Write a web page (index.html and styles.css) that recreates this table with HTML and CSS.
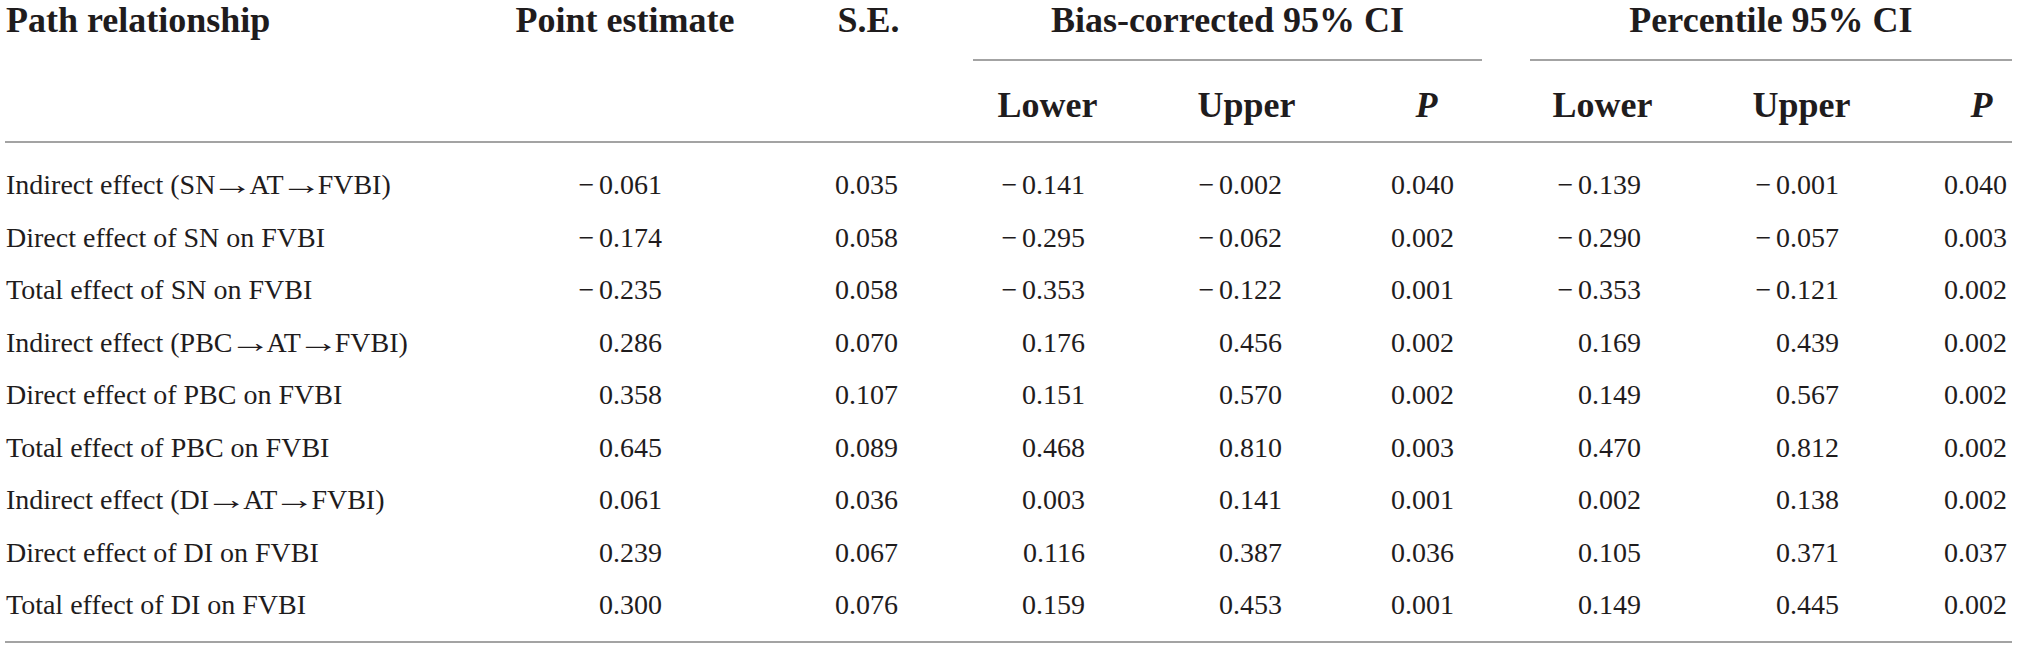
FILE: index.html
```html
<!DOCTYPE html>
<html lang="en">
<head>
<meta charset="utf-8">
<title>Mediation path analysis</title>
<link rel="stylesheet" href="styles.css">
</head>
<body>
<div class="tbl">
  <div class="thead">
    <div class="h h-path">Path relationship</div>
    <div class="h h-point">Point estimate</div>
    <div class="h h-se">S.E.</div>
    <div class="h h-group h-bias">Bias-corrected 95% CI</div>
    <div class="h h-group h-perc">Percentile 95% CI</div>
    <div class="h h-sub h-bl">Lower</div>
    <div class="h h-sub h-bu">Upper</div>
    <div class="h h-sub h-bp"><i>P</i></div>
    <div class="h h-sub h-pl">Lower</div>
    <div class="h h-sub h-pu">Upper</div>
    <div class="h h-sub h-pp"><i>P</i></div>
  </div>
  <div class="tbody">
    <div class="row"><span>Indirect effect (SN<span class="arr">→</span>AT<span class="arr">→</span>FVBI)</span><span>&#8722;&#8198;0.061</span><span>0.035</span><span>&#8722;&#8198;0.141</span><span>&#8722;&#8198;0.002</span><span>0.040</span><span></span><span>&#8722;&#8198;0.139</span><span>&#8722;&#8198;0.001</span><span>0.040</span></div>
    <div class="row"><span>Direct effect of SN on FVBI</span><span>&#8722;&#8198;0.174</span><span>0.058</span><span>&#8722;&#8198;0.295</span><span>&#8722;&#8198;0.062</span><span>0.002</span><span></span><span>&#8722;&#8198;0.290</span><span>&#8722;&#8198;0.057</span><span>0.003</span></div>
    <div class="row"><span>Total effect of SN on FVBI</span><span>&#8722;&#8198;0.235</span><span>0.058</span><span>&#8722;&#8198;0.353</span><span>&#8722;&#8198;0.122</span><span>0.001</span><span></span><span>&#8722;&#8198;0.353</span><span>&#8722;&#8198;0.121</span><span>0.002</span></div>
    <div class="row"><span>Indirect effect (PBC<span class="arr">→</span>AT<span class="arr">→</span>FVBI)</span><span>0.286</span><span>0.070</span><span>0.176</span><span>0.456</span><span>0.002</span><span></span><span>0.169</span><span>0.439</span><span>0.002</span></div>
    <div class="row"><span>Direct effect of PBC on FVBI</span><span>0.358</span><span>0.107</span><span>0.151</span><span>0.570</span><span>0.002</span><span></span><span>0.149</span><span>0.567</span><span>0.002</span></div>
    <div class="row"><span>Total effect of PBC on FVBI</span><span>0.645</span><span>0.089</span><span>0.468</span><span>0.810</span><span>0.003</span><span></span><span>0.470</span><span>0.812</span><span>0.002</span></div>
    <div class="row"><span>Indirect effect (DI<span class="arr">→</span>AT<span class="arr">→</span>FVBI)</span><span>0.061</span><span>0.036</span><span>0.003</span><span>0.141</span><span>0.001</span><span></span><span>0.002</span><span>0.138</span><span>0.002</span></div>
    <div class="row"><span>Direct effect of DI on FVBI</span><span>0.239</span><span>0.067</span><span>0.116</span><span>0.387</span><span>0.036</span><span></span><span>0.105</span><span>0.371</span><span>0.037</span></div>
    <div class="row"><span>Total effect of DI on FVBI</span><span>0.300</span><span>0.076</span><span>0.159</span><span>0.453</span><span>0.001</span><span></span><span>0.149</span><span>0.445</span><span>0.002</span></div>
  </div>
</div>
</body>
</html>
```
FILE: styles.css
```css
html, body {
  margin: 0;
  padding: 0;
  background: #ffffff;
}

body {
  font-family: "Liberation Serif", "Times New Roman", serif;
  color: #1f1c1d;
}

.tbl {
  margin-left: 5px;
  width: 2007px;
}

.thead,
.row {
  display: grid;
  grid-template-columns: 475px 290px 203px 149px 249px 111px 48px 145px 253px 84px;
}

.thead {
  grid-template-rows: 61px 80px;
  border-bottom: 2px solid #a3a3a3;
}

.h {
  font-weight: bold;
  font-size: 36px;
  line-height: 41px;
  white-space: nowrap;
  text-align: center;
}

.h i {
  font-style: italic;
}

.h-path {
  grid-column: 1;
  grid-row: 1 / 3;
  text-align: left;
  padding-left: 1px;
}

.h-point {
  grid-column: 2;
  grid-row: 1 / 3;
}

.h-se {
  grid-column: 3;
  grid-row: 1 / 3;
  padding-right: 6px;
}

.h-group {
  grid-row: 1;
  border-bottom: 2px solid #a3a3a3;
}

.h-bias {
  grid-column: 4 / 7;
}

.h-perc {
  grid-column: 8 / 11;
}

.h-sub {
  grid-row: 2;
  padding-top: 24px;
}

.h-bl { grid-column: 4; }
.h-bu { grid-column: 5; }
.h-bp { grid-column: 6; }
.h-pl { grid-column: 8; }
.h-pu { grid-column: 9; }
.h-pp { grid-column: 10; padding-left: 23px; }

.tbody {
  padding-top: 16px;
  padding-bottom: 9px;
  border-bottom: 2px solid #a3a3a3;
}

.row {
  font-size: 28px;
  line-height: 52.5px;
  white-space: nowrap;
}

.row > span {
  text-align: right;
}

.row > span:nth-child(1) {
  text-align: left;
  padding-left: 1px;
}

.arr {
  display: inline-block;
  transform: scaleX(1.5);
  margin: 0 3px;
}

.row > span:nth-child(2) { padding-right: 108px; }
.row > span:nth-child(3) { padding-right: 75px; }
.row > span:nth-child(4) { padding-right: 37px; }
.row > span:nth-child(5) { padding-right: 89px; }
.row > span:nth-child(6) { padding-right: 28px; }
.row > span:nth-child(8) { padding-right: 34px; }
.row > span:nth-child(9) { padding-right: 89px; }
.row > span:nth-child(10) { padding-right: 5px; }
```
